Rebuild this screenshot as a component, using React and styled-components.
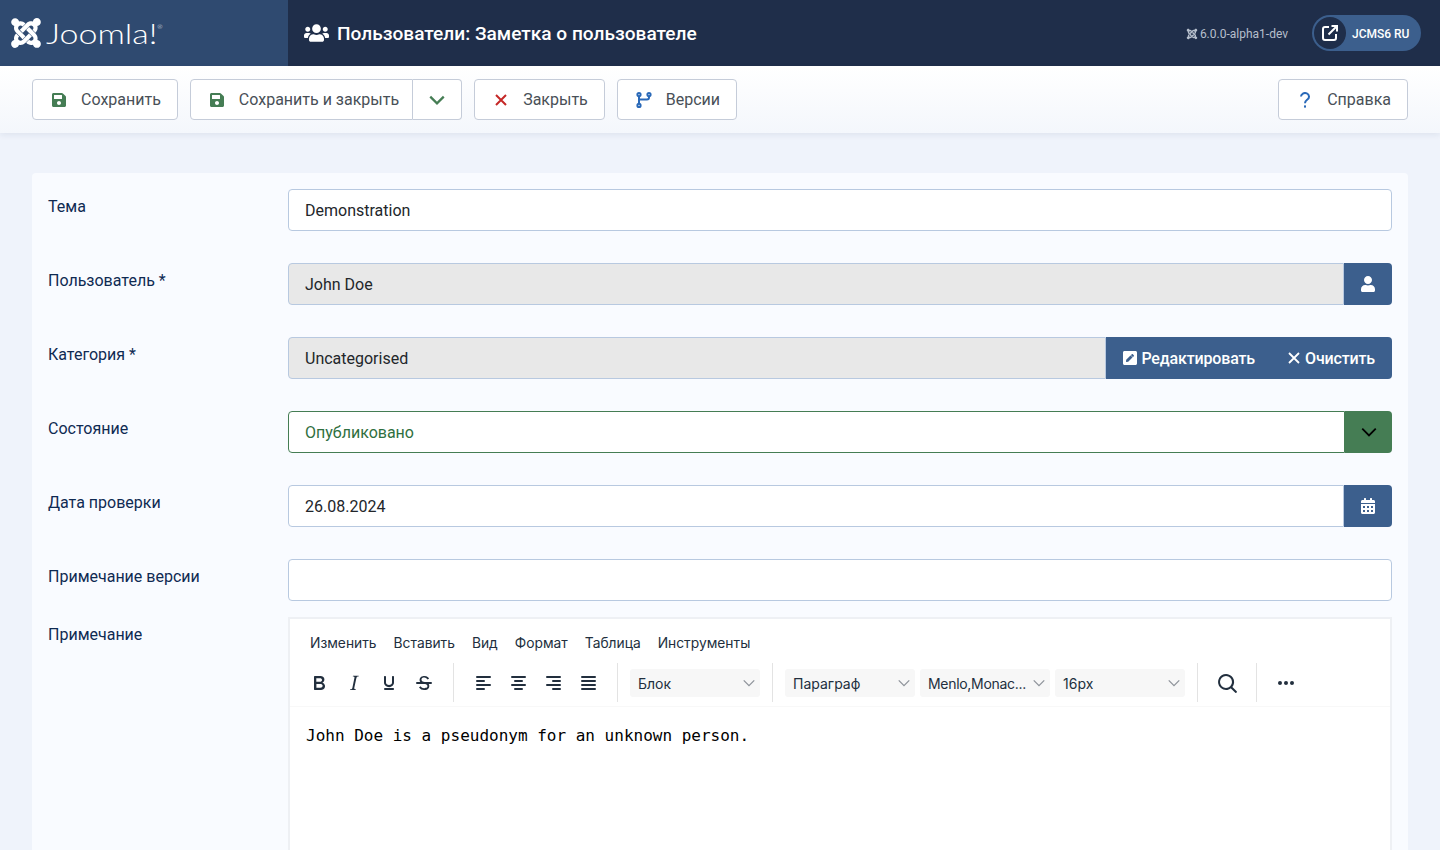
import React from 'react'
import styled, { createGlobalStyle } from 'styled-components'
import {
    FaJoomla, FaUsers, FaSave, FaUser, FaPenSquare, FaCalendarAlt,
} from 'react-icons/fa'

const GlobalStyle = createGlobalStyle`
    html, body { margin: 0; height: 100%; overflow: hidden; }
    body {
        background: #eff3fb;
        font-family: Roboto, "Liberation Sans", sans-serif;
        color: #22262a;
    }
    * { box-sizing: border-box; }
`

const Page = styled.div`
    height: 850px;
    overflow: hidden;
`

const Header = styled.header`
    display: flex;
    align-items: center;
    height: 66px;
    background: #1f2e4a;
    color: #fff;
`

const LogoBox = styled.div`
    display: flex;
    align-items: center;
    width: 288px;
    height: 100%;
    padding-left: 9px;
    background: #2f4a70;
    svg { width: 34px; height: 34px; flex: none; }
`

const WordMark = styled.span`
    position: relative;
    margin-left: 3px;
    font-family: Lato, sans-serif;
    font-weight: 300;
    font-size: 27px;
    transform: scaleX(1.26);
    transform-origin: left center;
    sup {
        position: absolute;
        top: 7px;
        right: -4px;
        font-size: 5px;
    }
`

const PageTitle = styled.h1`
    display: flex;
    align-items: center;
    flex: 1;
    margin: 0;
    padding-left: 16px;
    font-size: 19.1px;
    font-weight: 500;
    svg { width: 25px; height: 20px; margin-right: 8px; }
`

const Version = styled.div`
    display: flex;
    align-items: center;
    gap: 2px;
    margin-right: 24px;
    padding-top: 1px;
    font-size: 12px;
    color: #b6bfcc;
    svg { width: 12px; height: 12px; }
`

const SitePill = styled.a`
    display: flex;
    align-items: center;
    width: 109px;
    height: 36px;
    margin-right: 19px;
    padding: 1px 0 0 2px;
    border-radius: 18px;
    background: #3c5f8d;
    color: #fff;
    font-size: 12px;
    font-weight: 500;
`

const PillIcon = styled.span`
    display: flex;
    align-items: center;
    justify-content: center;
    width: 32px;
    height: 32px;
    margin: -1px 6px 0 0;
    border-radius: 50%;
    background: #1f2e4a;
`

const Toolbar = styled.div`
    display: flex;
    align-items: center;
    gap: 12px;
    height: 67px;
    padding: 0 32px;
    background: linear-gradient(#fff, #f4f7fc);
    box-shadow: 0 2px 6px rgba(30, 50, 90, 0.08);
    position: relative;
`

const ButtonGroup = styled.div`
    display: flex;
`

const ToolButton = styled.button`
    display: flex;
    align-items: center;
    height: 41px;
    padding: ${props => props.$joined ? '0 13px 0 15px' : '0 16px 0 15px'};
    border: 1px solid #c5ccd9;
    border-radius: ${props => props.$joined ? '4px 0 0 4px' : '4px'};
    background: #fff;
    color: #495057;
    font: 400 16px Roboto, sans-serif;
    margin-left: ${props => props.$push ? 'auto' : '0'};
`

const CaretButton = styled.button`
    display: flex;
    align-items: center;
    justify-content: center;
    width: 49px;
    height: 41px;
    border: 1px solid #c5ccd9;
    border-left: 0;
    border-radius: 0 4px 4px 0;
    background: #fff;
    padding: 0;
`

const ToolIcon = styled.span`
    display: flex;
    align-items: center;
    justify-content: center;
    width: 22px;
    margin-right: 11px;
    color: ${props => props.$color};
    svg { width: 14px; height: 16px; }
`

const Card = styled.main`
    margin: 40px 32px 0;
    padding: 16px;
    border-radius: 4px;
    background: #f9fbff;
`

const Row = styled.div`
    display: grid;
    grid-template-columns: 240px 1fr;
    margin-bottom: ${props => props.$tight ? '16px' : '32px'};
`

const Label = styled.label`
    padding-top: 8px;
    font-size: 16px;
    line-height: 20px;
    color: #0f2a52;
`

const Control = styled.div`
    display: flex;
    height: 42px;
`

const Field = styled.div`
    display: flex;
    align-items: center;
    flex: 1;
    height: 42px;
    padding: 0 16px;
    border: 1px solid ${props => props.$green ? '#457d54' : '#b8c9e0'};
    border-radius: ${props => props.$solo ? '4px' : '4px 0 0 4px'};
    background: ${props => props.$readOnly ? '#e8e8e8' : '#fff'};
    color: ${props => props.$green ? '#2f6f40' : '#22262a'};
    font-size: 16px;
`

const AddOn = styled.span`
    display: flex;
    align-items: center;
    justify-content: center;
    gap: 4px;
    flex: none;
    width: 48px;
    background: #3c5f8d;
    color: #fff;
    &:last-child { border-radius: 0 4px 4px 0; }
    svg { width: 14px; height: 16px; flex: none; }
`

const SelectAddOn = styled(AddOn)`
    width: 47px;
    background: #457d54;
    svg { width: 18px; height: 18px; }
`

const TextAddOn = styled(AddOn)`
    width: auto;
    padding: ${props => props.$pad};
    font-size: 16px;
    font-weight: 500;
    letter-spacing: -0.15px;
`

const Editor = styled.div`
    height: 500px;
    border: 2px solid #eef0f4;
    background: #fff;
    color: #222f3e;
`

const MenuBar = styled.div`
    display: flex;
    gap: 17px;
    height: 42px;
    padding: 15px 0 0 20px;
    font: 400 13.8px/18px Inter, sans-serif;
`

const EditorTools = styled.div`
    display: flex;
    align-items: center;
    height: 46px;
    padding: 0 0 2px 12px;
    border-bottom: 1px solid #f8f8f8;
`

const ToolSet = styled.div`
    display: flex;
    align-items: center;
    gap: ${props => props.$gap || 1}px;
    height: 39px;
    padding-right: 12px;
    margin-right: 12px;
    border-right: ${props => props.$last ? '0' : '1px solid #e3e3e3'};
`

const EditorIcon = styled.span`
    display: flex;
    align-items: center;
    justify-content: center;
    width: 34px;
    height: 34px;
    color: #222f3e;
    svg { display: block; }
`

const Select = styled.div`
    display: flex;
    align-items: center;
    justify-content: space-between;
    width: 130px;
    height: 28px;
    padding: 1px 4px 0 8px;
    border-radius: 3px;
    background: #f7f7f7;
    font: 400 14px Inter, sans-serif;
    letter-spacing: ${props => props.$squeeze ? '-0.3px' : '0'};
    white-space: nowrap;
`

const Content = styled.div`
    padding: 19px 16px 0;
    font: 400 16px/20px "DejaVu Sans Mono", monospace;
    color: #000;
`

const Chevron = ({ size = 18, color = '#000', width = 1.6 }) =>
    <svg width={size} height={size} viewBox="0 0 16 16" fill="none">
        <path d="M2 5l6 6 6-6" stroke={color} strokeWidth={width} />
    </svg>

const CloseMark = ({ size = 14, width = 2 }) =>
    <svg width={size} height={size} viewBox="0 0 14 14" fill="none" stroke="currentColor" strokeWidth={width}>
        <path d="M2 2l10 10M12 2L2 12" />
    </svg>

const BranchMark = () =>
    <svg viewBox="0 0 16 16" style={{ width: 16, height: 16 }} fill="none" stroke="currentColor" strokeWidth="2">
        <circle cx="3" cy="2.6" r="1.6" />
        <circle cx="3" cy="13.4" r="1.6" />
        <circle cx="13" cy="2.6" r="1.6" />
        <path d="M3 4.2v7.6M13 4.2v1.3a2 2 0 0 1-2 2H3" />
    </svg>

const QuestionMark = () =>
    <svg viewBox="0 0 14 16" fill="none" stroke="currentColor" strokeWidth="2">
        <path d="M3 4.6a4 3.6 0 1 1 6.4 2.9C8 8.6 7 9.2 7 11.2" />
        <rect x="6" y="13.4" width="2" height="2.2" fill="currentColor" stroke="none" />
    </svg>

const LinkMark = () =>
    <svg width="18" height="18" viewBox="0 0 18 18" fill="none" stroke="#fff" strokeWidth="2">
        <path d="M8 3H4a2 2 0 0 0-2 2v9a2 2 0 0 0 2 2h9a2 2 0 0 0 2-2v-4" />
        <path d="M7.5 10.5L15.5 2.5M10.5 2h5.5v5.5" />
    </svg>

const Glyph = ({ d }) =>
    <EditorIcon>
        <svg width="24" height="24" viewBox="0 0 24 24" fill="currentColor"><path d={d} /></svg>
    </EditorIcon>

const Lines = ({ rows }) =>
    <EditorIcon>
        <svg width="24" height="24" viewBox="0 0 24 24" fill="currentColor">
            {rows.map(([x, w], i) => <rect key={i} x={x} y={5 + i * 4} width={w} height="2" rx="1" />)}
        </svg>
    </EditorIcon>

const SelectBox = ({ children, squeeze }) =>
    <Select $squeeze={squeeze}>
        <span>{children}</span>
        <Chevron size={14} color="#8f949b" width={1.5} />
    </Select>

const BOLD = 'M7.8 19c-.3 0-.5 0-.6-.2l-.2-.5V5.7c0-.2 0-.4.2-.5l.6-.2h5c1.5 0 2.7.3 3.5 1 .7.6 1.1 1.4 1.1 2.5a3 3 0 0 1-.6 1.9c-.4.6-1 1-1.6 1.2.4.1.9.3 1.3.6s.8.7 1 1.2c.4.4.5 1 .5 1.6 0 1.3-.4 2.3-1.3 3-.8.7-2.1 1-3.8 1H7.8zm5-8.3c.6 0 1.2-.1 1.6-.5.4-.3.6-.7.6-1.3 0-1.1-.8-1.7-2.3-1.7H9.3v3.5h3.4zm.5 6c.7 0 1.3-.1 1.7-.4.4-.4.6-.9.6-1.5s-.2-1-.7-1.4c-.4-.3-1-.4-2-.4H9.4v3.8h4z'
const ITALIC = 'M16.7 4.7l-.1.9h-.3c-.6 0-1 0-1.4.3-.3.3-.4.6-.5 1.1l-2.1 9.8v.6c0 .5.4.8 1.4.8h.2l-.2.8H8l.2-.8h.2c1.1 0 1.8-.5 2-1.5l2-9.8.1-.5c0-.6-.4-.8-1.4-.8h-.3l.2-.9h5.8z'
const UNDERLINE = 'M16 5c.6 0 1 .4 1 1v5.5a4 4 0 0 1-.4 1.8l-1 1.4a5.3 5.3 0 0 1-5.5 1 5 5 0 0 1-1.6-1c-.5-.4-.8-.9-1.1-1.4a4 4 0 0 1-.4-1.8V6c0-.6.4-1 1-1s1 .4 1 1v5.5c0 .3 0 .6.2 1l.6.7a3.3 3.3 0 0 0 2.2.8 3.4 3.4 0 0 0 2.2-.8c.3-.2.4-.5.6-.8l.2-.9V6c0-.6.4-1 1-1zM8 17h8c.6 0 1 .4 1 1s-.4 1-1 1H8a1 1 0 0 1 0-2z'
const STRIKE = 'M15.6 8.5c-.5-.7-1-1.1-1.3-1.3-.6-.4-1.3-.6-2-.6-2.7 0-2.8 1.7-2.8 2.1 0 1.6 1.8 2 3.2 2.3 4.4.9 4.6 2.8 4.6 3.9 0 1.4-.7 4.1-5 4.1A6.2 6.2 0 0 1 7 16.4l1.5-1.1c.4.6 1.6 2 3.7 2 1.6 0 2.5-.4 3-1.2.4-.8.3-2-.8-2.6-.7-.4-1.6-.7-2.9-1-1-.2-3.9-.8-3.9-3.6C7.6 6 10.3 5 12.4 5c2.9 0 4.2 1.6 4.7 2.4l-1.5 1.1zM5 11h14a1 1 0 0 1 0 2H5a1 1 0 0 1 0-2z'
const SEARCH = 'M16 17.3a8 8 0 1 1 1.4-1.4l4.3 4.4a1 1 0 0 1-1.4 1.4l-4.4-4.3zm-5-.3a6 6 0 1 0 0-12 6 6 0 0 0 0 12z'
const MORE = 'M6 10a2 2 0 0 0-2 2c0 1.1.9 2 2 2a2 2 0 0 0 2-2 2 2 0 0 0-2-2zm12 0a2 2 0 0 0-2 2c0 1.1.9 2 2 2a2 2 0 0 0 2-2 2 2 0 0 0-2-2zm-6 0a2 2 0 0 0-2 2c0 1.1.9 2 2 2a2 2 0 0 0 2-2 2 2 0 0 0-2-2z'

const MENU = ['Изменить', 'Вставить', 'Вид', 'Формат', 'Таблица', 'Инструменты']

export default function App() {
    return (
        <Page>
            <GlobalStyle />
            <Header>
                <LogoBox>
                    <FaJoomla />
                    <WordMark>Joomla!<sup>®</sup></WordMark>
                </LogoBox>
                <PageTitle><FaUsers />Пользователи: Заметка о пользователе</PageTitle>
                <Version><FaJoomla />6.0.0-alpha1-dev</Version>
                <SitePill>
                    <PillIcon><LinkMark /></PillIcon>
                    JCMS6 RU
                </SitePill>
            </Header>
            <Toolbar>
                <ToolButton><ToolIcon $color="#457d54"><FaSave /></ToolIcon>Сохранить</ToolButton>
                <ButtonGroup>
                    <ToolButton $joined><ToolIcon $color="#457d54"><FaSave /></ToolIcon>Сохранить и закрыть</ToolButton>
                    <CaretButton><Chevron color="#457d54" width={2} /></CaretButton>
                </ButtonGroup>
                <ToolButton><ToolIcon $color="#c52827"><CloseMark /></ToolIcon>Закрыть</ToolButton>
                <ToolButton><ToolIcon $color="#2a69b8"><BranchMark /></ToolIcon>Версии</ToolButton>
                <ToolButton $push><ToolIcon $color="#2a69b8"><QuestionMark /></ToolIcon>Справка</ToolButton>
            </Toolbar>
            <Card>
                <Row>
                    <Label>Тема</Label>
                    <Control><Field $solo>Demonstration</Field></Control>
                </Row>
                <Row>
                    <Label>Пользователь *</Label>
                    <Control>
                        <Field $readOnly>John Doe</Field>
                        <AddOn><FaUser /></AddOn>
                    </Control>
                </Row>
                <Row>
                    <Label>Категория *</Label>
                    <Control>
                        <Field $readOnly>Uncategorised</Field>
                        <TextAddOn $pad="0 15px 0 17px"><FaPenSquare />Редактировать</TextAddOn>
                        <TextAddOn $pad="0 17px"><CloseMark width={1.8} />Очистить</TextAddOn>
                    </Control>
                </Row>
                <Row>
                    <Label>Состояние</Label>
                    <Control>
                        <Field $green>Опубликовано</Field>
                        <SelectAddOn><Chevron /></SelectAddOn>
                    </Control>
                </Row>
                <Row>
                    <Label>Дата проверки</Label>
                    <Control>
                        <Field>26.08.2024</Field>
                        <AddOn><FaCalendarAlt /></AddOn>
                    </Control>
                </Row>
                <Row $tight>
                    <Label>Примечание версии</Label>
                    <Control><Field $solo /></Control>
                </Row>
                <Row>
                    <Label>Примечание</Label>
                    <Editor>
                        <MenuBar>{MENU.map(item => <span key={item}>{item}</span>)}</MenuBar>
                        <EditorTools>
                            <ToolSet>
                                <Glyph d={BOLD} />
                                <Glyph d={ITALIC} />
                                <Glyph d={UNDERLINE} />
                                <Glyph d={STRIKE} />
                            </ToolSet>
                            <ToolSet>
                                <Lines rows={[[5, 15], [5, 9], [5, 15], [5, 9]]} />
                                <Lines rows={[[5, 15], [8, 9], [5, 15], [8, 9]]} />
                                <Lines rows={[[5, 15], [11, 9], [5, 15], [11, 9]]} />
                                <Lines rows={[[5, 15], [5, 15], [5, 15], [5, 15]]} />
                            </ToolSet>
                            <ToolSet><SelectBox>Блок</SelectBox></ToolSet>
                            <ToolSet $gap={5}>
                                <SelectBox>Параграф</SelectBox>
                                <SelectBox squeeze>Menlo,Monac...</SelectBox>
                                <SelectBox>16px</SelectBox>
                            </ToolSet>
                            <ToolSet><Glyph d={SEARCH} /></ToolSet>
                            <ToolSet $last><Glyph d={MORE} /></ToolSet>
                        </EditorTools>
                        <Content>John Doe is a pseudonym for an unknown person.</Content>
                    </Editor>
                </Row>
            </Card>
        </Page>
    )
}
